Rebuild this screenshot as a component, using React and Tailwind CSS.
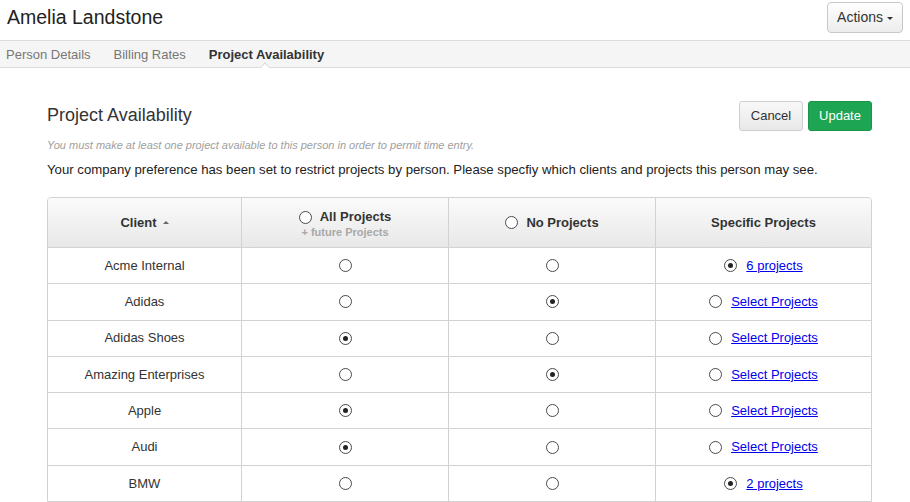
import React from "react";

const rows = [
  { name: "Acme Internal", sel: "specific", link: "6 projects" },
  { name: "Adidas", sel: "none", link: "Select Projects" },
  { name: "Adidas Shoes", sel: "all", link: "Select Projects" },
  { name: "Amazing Enterprises", sel: "none", link: "Select Projects" },
  { name: "Apple", sel: "all", link: "Select Projects" },
  { name: "Audi", sel: "all", link: "Select Projects" },
  { name: "BMW", sel: "specific", link: "2 projects" },
];

function Radio({ checked }) {
  return (
    <span className="relative inline-block w-[13px] h-[13px] shrink-0 rounded-full border border-[#4a4a4a] bg-white">
      {checked && <span className="absolute left-[3px] top-[3px] w-[5px] h-[5px] rounded-full bg-[#222]" />}
    </span>
  );
}

export default function App() {
  return (
    <div className="w-[910px] h-[502px] overflow-hidden bg-white text-[#333]" style={{ fontFamily: '"Liberation Sans", Arial, sans-serif' }}>
      <div className="flex items-start justify-between h-[40px] pl-[7px] pr-[7px]">
        <h1 className="mt-[5px] text-[19.5px] leading-[24px] text-[#222]">Amelia Landstone</h1>
        <button className="mt-[2px] h-[31px] px-[9px] flex items-center gap-[4px] rounded-[4px] border border-[#c8c8c8] bg-gradient-to-b from-white to-[#ececec] text-[14px] text-[#333]">
          Actions
          <span className="inline-block w-0 h-0 border-l-[3px] border-r-[3px] border-t-[3px] border-l-transparent border-r-transparent border-t-[#333] mt-[1px]" />
        </button>
      </div>
      <div className="h-[28px] border-y border-[#dcdcdc] bg-[#f5f5f5] flex items-center gap-[23px] pl-[6px] text-[13px]">
        <span className="text-[#777] pt-[1px]">Person Details</span>
        <span className="text-[#777] pt-[1px]">Billing Rates</span>
        <span className="relative h-full flex items-center font-bold text-[#333] pt-[1px]">
          Project Availability
          <span className="absolute left-[52px] bottom-[-5px] w-[8px] h-[8px] rotate-45 bg-white border-l border-t border-[#dcdcdc]" />
        </span>
      </div>
      <div className="pl-[47px] pr-[38px] pt-[33px]">
        <div className="flex items-start justify-between">
          <h2 className="mt-[2px] text-[18px] leading-[24px] text-[#333]">Project Availability</h2>
          <div className="flex gap-[5px]">
            <button className="h-[30px] w-[64px] rounded-[3px] border border-[#cfcfcf] bg-gradient-to-b from-[#f8f8f8] to-[#e8e8e8] text-[13px] text-[#333]">Cancel</button>
            <button className="h-[30px] w-[64px] rounded-[3px] border border-[#19964a] bg-[#1ea553] text-[13px] text-white">Update</button>
          </div>
        </div>
        <p className="mt-[8px] text-[11px] leading-[12px] italic text-[#a0a0a0]">You must make at least one project available to this person in order to permit time entry.</p>
        <p className="mt-[11px] text-[13.2px] leading-[16px] text-[#222]">Your company preference has been set to restrict projects by person. Please specfiy which clients and projects this person may see.</p>
        <div className="mt-[19px] border border-[#d2d2d2] rounded-t-[4px] overflow-hidden">
          <div className="grid grid-cols-[193px_207px_207px_1fr] h-[49px] bg-gradient-to-b from-[#fbfbfb] to-[#e8e8e8] text-[13px] font-bold text-[#333]">
            <div className="flex items-center justify-center gap-[6px]">
              Client
              <span className="inline-block w-0 h-0 border-l-[3px] border-r-[3px] border-b-[3px] border-l-transparent border-r-transparent border-b-[#666]" />
            </div>
            <div className="border-l border-[#d2d2d2] flex flex-col items-center justify-center">
              <div className="flex items-center gap-[8px] leading-[16px] pt-[3px]"><Radio />All Projects</div>
              <div className="text-[11px] leading-[14px] text-[#a8a8a8]">+ future Projects</div>
            </div>
            <div className="border-l border-[#d2d2d2] flex items-center justify-center gap-[8px]">
              <Radio />No Projects
            </div>
            <div className="border-l border-[#d2d2d2] flex items-center justify-center">Specific Projects</div>
          </div>
          {rows.map((r) => (
            <div key={r.name} className="grid grid-cols-[193px_207px_207px_1fr] h-[36.3px] border-t border-[#d2d2d2] text-[13px] text-[#333]">
              <div className="flex items-center justify-center">{r.name}</div>
              <div className="border-l border-[#d2d2d2] flex items-center justify-center"><Radio checked={r.sel === "all"} /></div>
              <div className="border-l border-[#d2d2d2] flex items-center justify-center"><Radio checked={r.sel === "none"} /></div>
              <div className="border-l border-[#d2d2d2] flex items-center justify-center gap-[9px]">
                <Radio checked={r.sel === "specific"} />
                <a href="#" className="text-[#0000ee] underline">{r.link}</a>
              </div>
            </div>
          ))}
        </div>
      </div>
    </div>
  );
}
